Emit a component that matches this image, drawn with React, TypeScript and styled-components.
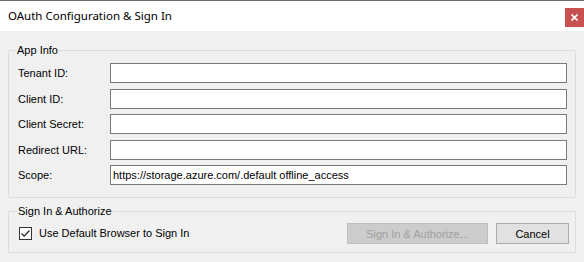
import { Fragment } from 'react';
import styled, { createGlobalStyle } from 'styled-components';

const GlobalStyle = createGlobalStyle`
  html, body {
    margin: 0;
    padding: 0;
    background: #f0f0f0;
  }
  body {
    font-family: 'Liberation Sans', Arial, sans-serif;
    font-size: 11px;
    color: #000;
  }
`;

const Window = styled.div`
  width: 584px;
  height: 262px;
  display: flex;
  flex-direction: column;
  background: #f0f0f0;
  overflow: hidden;
`;

const TitleBar = styled.div`
  height: 30px;
  flex: none;
  display: flex;
  align-items: flex-start;
  justify-content: space-between;
  background: #ffffff;
  border-top: 1px solid #6b6b6b;
`;

const Title = styled.div`
  padding: 7px 0 0 8px;
  font-family: 'Noto Sans', 'Open Sans', sans-serif;
  font-size: 11.5px;
  line-height: 16px;
  color: #000;
`;

const CloseButton = styled.div`
  margin-top: 7px;
  width: 19px;
  height: 19px;
  background: #c75050;
  display: flex;
  align-items: center;
  justify-content: center;
`;

const Body = styled.div`
  flex: 1;
  padding: 13px 8px 0 8px;
  display: flex;
  flex-direction: column;
`;

const Group = styled.fieldset<{ $top?: number }>`
  margin: ${(p) => p.$top ?? 0}px 0 0 0;
  padding: ${(p) => (p.$top ? '5px 6px 8px 10px' : '6px 8px 12px 9px')};
  border: 1px solid #dcdcdc;
  border-radius: 2px;
  min-width: 0;
`;

const Legend = styled.legend`
  margin-left: -2px;
  padding: 0 1px;
  font-size: 11px;
  line-height: 13px;
`;

const Form = styled.div`
  display: grid;
  grid-template-columns: 92px 1fr;
  row-gap: 5.5px;
  align-items: center;
`;

const Label = styled.label`
  line-height: 13px;
  padding-top: 1px;
`;

const TextBox = styled.div`
  height: 18px;
  border: 1px solid #7a7a7a;
  background: #fff;
  padding: 0 2px;
  display: flex;
  align-items: center;
  font-size: 11px;
  white-space: nowrap;
  overflow: hidden;
`;

const ActionRow = styled.div`
  display: flex;
  align-items: center;
`;

const CheckLabel = styled.label`
  display: flex;
  align-items: center;
  gap: 7px;
  flex: 1;
  line-height: 13px;
`;

const CheckBox = styled.span`
  width: 11px;
  height: 11px;
  border: 1px solid #333333;
  background: #fff;
  display: flex;
  align-items: center;
  justify-content: center;
`;

const Button = styled.button<{ $width: number }>`
  width: ${(p) => p.$width}px;
  height: 21px;
  margin-left: 8px;
  padding: 0;
  font-family: 'Liberation Sans', Arial, sans-serif;
  font-size: 11px;
  color: ${(p) => (p.disabled ? '#a0a0a0' : '#000')};
  background: ${(p) => (p.disabled ? '#cccccc' : '#e1e1e1')};
  border: 1px solid ${(p) => (p.disabled ? '#bfbfbf' : '#adadad')};
  border-radius: 0;
`;

const fields = [
  { label: 'Tenant ID:', value: '' },
  { label: 'Client ID:', value: '' },
  { label: 'Client Secret:', value: '' },
  { label: 'Redirect URL:', value: '' },
  { label: 'Scope:', value: 'https://storage.azure.com/.default offline_access' },
];

export default function App() {
  return (
    <>
      <GlobalStyle />
      <Window>
        <TitleBar>
          <Title>OAuth Configuration &amp; Sign In</Title>
          <CloseButton>
            <svg width="7" height="7" viewBox="0 0 7 7">
              <path d="M0.5 0.5 L6.5 6.5 M6.5 0.5 L0.5 6.5" stroke="#fff" strokeWidth="1.6" />
            </svg>
          </CloseButton>
        </TitleBar>
        <Body>
          <Group>
            <Legend>App Info</Legend>
            <Form>
              {fields.map((f) => (
                <Fragment key={f.label}>
                  <Label>{f.label}</Label>
                  <TextBox>{f.value}</TextBox>
                </Fragment>
              ))}
            </Form>
          </Group>
          <Group $top={7}>
            <Legend>Sign In &amp; Authorize</Legend>
            <ActionRow>
              <CheckLabel>
                <CheckBox>
                  <svg width="11" height="11" viewBox="0 0 11 11">
                    <path d="M1.5 5.5 L4.2 8.2 L9.5 2.5" stroke="#222" strokeWidth="1.2" fill="none" />
                  </svg>
                </CheckBox>
                Use Default Browser to Sign In
              </CheckLabel>
              <Button $width={141} disabled>
                Sign In &amp; Authorize...
              </Button>
              <Button $width={73}>Cancel</Button>
            </ActionRow>
          </Group>
        </Body>
      </Window>
    </>
  );
}
